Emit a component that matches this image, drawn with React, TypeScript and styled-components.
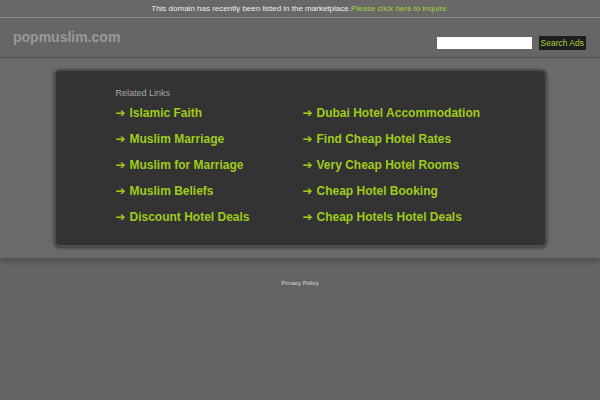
import React from 'react';
import styled, { createGlobalStyle } from 'styled-components';

const GlobalStyle = createGlobalStyle`
  html, body {
    margin: 0;
    padding: 0;
    background: #646464;
    font-family: "Liberation Sans", Arial, sans-serif;
  }
`;

const colors = {
    green: '#9fcb1b',
    linkGreen: '#a6d23a',
    band: '#6a6a6a',
    panel: '#333333',
};

const TopBar = styled.div`
  height: 17px;
  display: flex;
  align-items: center;
  justify-content: center;
  background: #686868;
  border-bottom: 1px solid #8a8a8a;
  color: #eeeeee;
  font-size: 8px;
`;

const TopLink = styled.a`
  color: ${colors.linkGreen};
  text-decoration: none;
`;

const Header = styled.div`
  height: 39px;
  display: flex;
  justify-content: space-between;
  align-items: flex-start;
  padding: 0 14px 0 13px;
  background: #666666;
  border-bottom: 1px solid #575757;
`;

const Logo = styled.div`
  margin-top: 11px;
  font-size: 14px;
  font-weight: bold;
  color: #9a9a9a;
`;

const SearchForm = styled.div`
  display: flex;
  align-items: center;
  gap: 7px;
  margin-top: 18px;
`;

const SearchInput = styled.input`
  width: 95px;
  height: 12px;
  box-sizing: border-box;
  border: none;
  background: #ffffff;
  padding: 0;
`;

const SearchButton = styled.button`
  height: 14px;
  padding: 0 2px;
  border: none;
  background: #1e1e1e;
  color: ${colors.linkGreen};
  font-family: "Liberation Sans", Arial, sans-serif;
  font-size: 8.5px;
`;

const Band = styled.div`
  height: 200px;
  padding-top: 11px;
  box-sizing: border-box;
  background: ${colors.band};
  box-shadow: 0 3px 6px rgba(0, 0, 0, 0.25);
`;

const Panel = styled.div`
  width: 493px;
  height: 178px;
  margin: 0 auto;
  box-sizing: border-box;
  background: ${colors.panel};
  border: 2px solid #4e4e4e;
  border-radius: 6px;
  box-shadow: 0 1px 3px rgba(0, 0, 0, 0.5);
  padding: 17px 0 0 60px;
`;

const Caption = styled.div`
  font-size: 9px;
  color: #a9a9a9;
  margin-bottom: 2px;
`;

const LinkGrid = styled.div`
  display: grid;
  grid-template-columns: 187px 1fr;
  grid-auto-rows: 26px;
`;

const LinkItem = styled.a`
  display: flex;
  align-items: center;
  gap: 3px;
  height: 26px;
  color: ${colors.green};
  font-size: 12px;
  font-weight: bold;
  text-decoration: none;
  white-space: nowrap;
`;

const Arrow = styled.span`
  font-family: "DejaVu Sans", sans-serif;
  font-size: 12px;
  width: 11px;
`;

const Footer = styled.div`
  display: flex;
  justify-content: center;
  padding-top: 22px;
`;

const FooterLink = styled.a`
  color: #dddddd;
  font-size: 6px;
  text-decoration: underline;
`;

const links = [
    'Islamic Faith',
    'Dubai Hotel Accommodation',
    'Muslim Marriage',
    'Find Cheap Hotel Rates',
    'Muslim for Marriage',
    'Very Cheap Hotel Rooms',
    'Muslim Beliefs',
    'Cheap Hotel Booking',
    'Discount Hotel Deals',
    'Cheap Hotels Hotel Deals',
];

export default function App() {
    return (
        <>
            <GlobalStyle />
            <TopBar>
                This domain has recently been listed in the marketplace.
                <TopLink href="#">Please click here to inquire.</TopLink>
            </TopBar>
            <Header>
                <Logo>popmuslim.com</Logo>
                <SearchForm>
                    <SearchInput type="text" />
                    <SearchButton>Search Ads</SearchButton>
                </SearchForm>
            </Header>
            <Band>
                <Panel>
                    <Caption>Related Links</Caption>
                    <LinkGrid>
                        {links.map((label) => (
                            <LinkItem key={label} href="#">
                                <Arrow>➔</Arrow>
                                {label}
                            </LinkItem>
                        ))}
                    </LinkGrid>
                </Panel>
            </Band>
            <Footer>
                <FooterLink href="#">Privacy Policy</FooterLink>
            </Footer>
        </>
    );
}
